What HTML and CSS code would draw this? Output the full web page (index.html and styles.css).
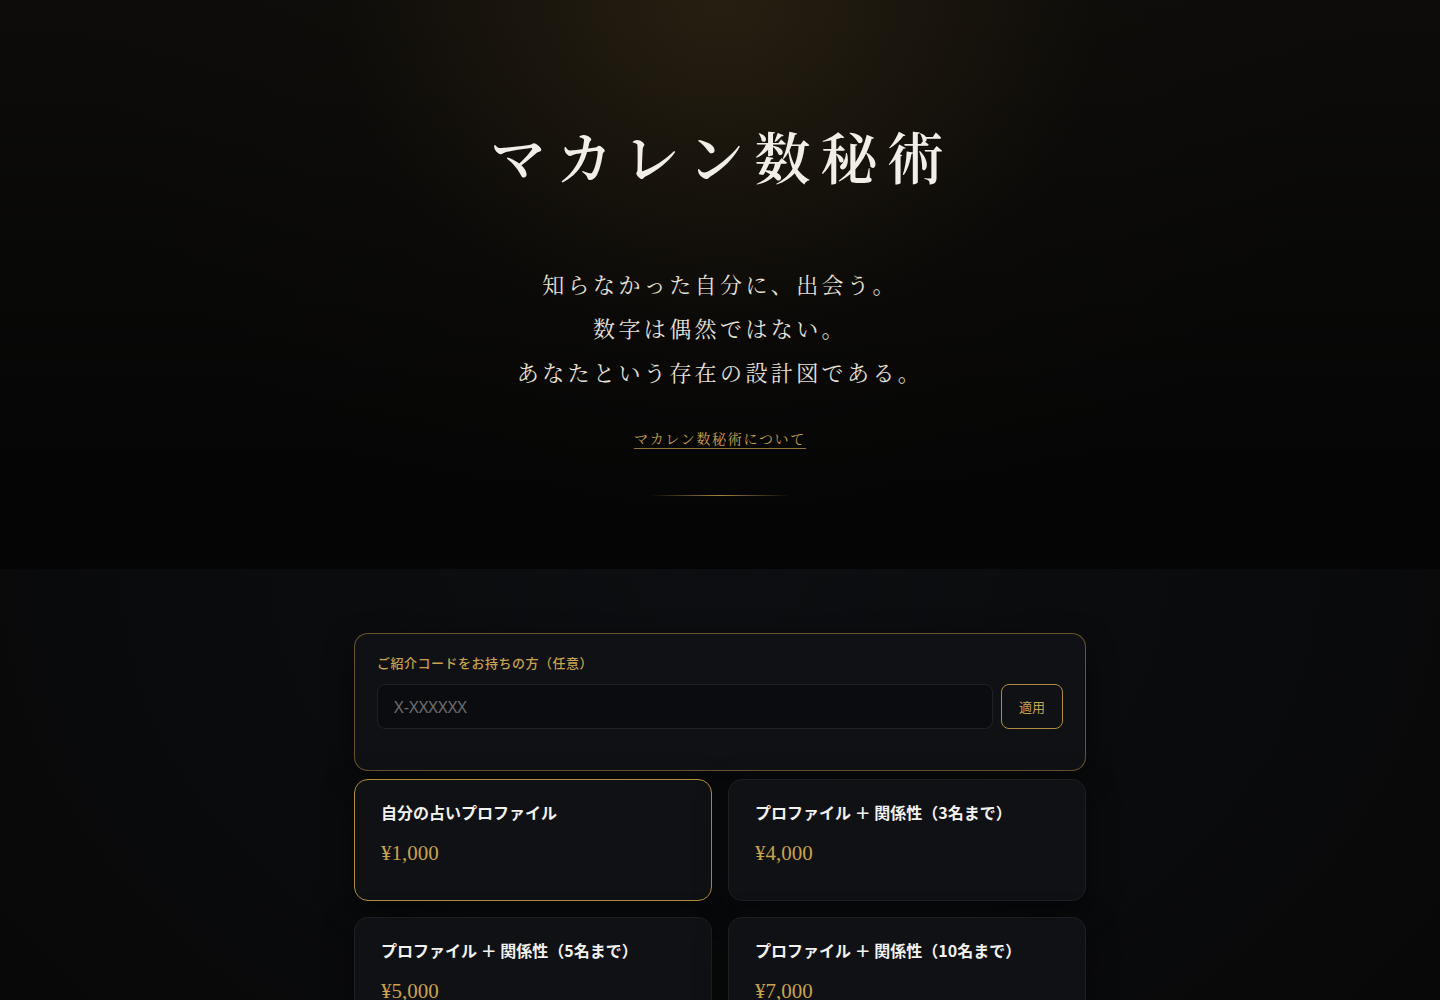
FILE: index.html
```html
<!DOCTYPE html>
<html lang="ja">
    <head>
        <meta charset="UTF-8" />
        <title>マカレン数秘術</title>

        <link rel="stylesheet" href="styles.css">
    </head>
    <body>
        <header class="hero">
            <h1 class="title">マカレン数秘術</h1>

            <p class="lead">
                知らなかった自分に、出会う。<br>
                数字は偶然ではない。<br>
                あなたという存在の設計図である。
            </p>

            <a class="about" href="#">マカレン数秘術について</a>

            <div class="divider"></div>
        </header>

        <main class="shop">
            <div class="wrap">
                <div class="referral">
                    <label class="referral-label" for="code">ご紹介コードをお持ちの方（任意）</label>
                    <div class="referral-row">
                        <input id="code" class="referral-input" type="text" placeholder="X-XXXXXX">
                        <button class="referral-btn" type="button">適用</button>
                    </div>
                    <div class="referral-msg"></div>
                </div>

                <div class="plans">
                    <div class="plan selected">
                        <div class="plan-name">自分の占いプロファイル</div>
                        <div class="plan-price">¥1,000</div>
                    </div>
                    <div class="plan">
                        <div class="plan-name">プロファイル ＋ 関係性（3名まで）</div>
                        <div class="plan-price">¥4,000</div>
                    </div>
                    <div class="plan">
                        <div class="plan-name">プロファイル ＋ 関係性（5名まで）</div>
                        <div class="plan-price">¥5,000</div>
                    </div>
                    <div class="plan">
                        <div class="plan-name">プロファイル ＋ 関係性（10名まで）</div>
                        <div class="plan-price">¥7,000</div>
                    </div>
                </div>
            </div>
        </main>
    </body>
</html>
```

FILE: styles.css
```css
body {
    margin: 0;
    background: #080808;
    color: #ece8df;
    font-family: "Noto Sans CJK JP", "Noto Sans", sans-serif;
}

.hero {
    height: 569px;
    box-sizing: border-box;
    padding-top: 112px;
    text-align: center;
    background:
        radial-gradient(ellipse 640px 560px at 50% 0, rgba(60, 46, 22, 0.55), rgba(20, 16, 10, 0.2) 60%, rgba(0, 0, 0, 0) 100%),
        linear-gradient(#0d0c0a, #050505 85%);
}

.title {
    margin: 0;
    font-family: "Noto Serif CJK JP", "Noto Serif JP", "Noto Sans CJK JP", serif;
    font-size: 56px;
    font-weight: 600;
    letter-spacing: 10.5px;
    line-height: 86px;
    color: #f1eee8;
    padding-left: 4px;
}

.lead {
    margin: 64px 0 0;
    font-family: "Noto Serif CJK JP", "Noto Serif JP", "Noto Sans CJK JP", serif;
    font-size: 22px;
    line-height: 44px;
    letter-spacing: 3.4px;
    color: #e6e1d8;
}

.about {
    display: inline-block;
    margin-top: 34px;
    font-family: "Noto Serif CJK JP", "Noto Serif JP", "Noto Sans CJK JP", serif;
    font-size: 14px;
    letter-spacing: 1.7px;
    line-height: 20px;
    color: #c9a24e;
    text-decoration: none;
    border-bottom: 1px solid rgba(201, 162, 78, 0.7);
}

.divider {
    width: 140px;
    height: 1px;
    margin: 46px auto 0;
    background: linear-gradient(90deg, rgba(201, 162, 78, 0), rgba(201, 162, 78, 0.8), rgba(201, 162, 78, 0));
}

.shop {
    min-height: 431px;
    padding-top: 64px;
    background:
        radial-gradient(ellipse 900px 700px at 50% 0, #0d0e11, #0a0b0d 60%, #080808 100%);
}

.wrap {
    width: 732px;
    margin: 0 auto;
}

.referral {
    border: 1px solid rgba(176, 141, 62, 0.55);
    border-radius: 14px;
    background: #101115;
    padding: 20px 22px 22px;
    box-shadow: 0 10px 30px rgba(0, 0, 0, 0.45);
}

.referral-label {
    display: block;
    font-size: 13px;
    font-weight: 500;
    color: #c9a24e;
    line-height: 18px;
    margin-bottom: 12px;
    letter-spacing: 0.5px;
}

.referral-row {
    display: flex;
    gap: 8px;
}

.referral-input {
    flex: 1;
    height: 45px;
    box-sizing: border-box;
    background: #0b0c0f;
    border: 1px solid #1f2126;
    border-radius: 8px;
    padding: 0 16px;
    font-family: "Noto Sans", "Noto Sans CJK JP", sans-serif;
    font-size: 16.5px;
    color: #ddd;
    outline: none;
}

.referral-input::placeholder {
    color: #6c6c6e;
}

.referral-btn {
    width: 62px;
    height: 45px;
    background: transparent;
    border: 1px solid #b08d3e;
    border-radius: 8px;
    color: #c9a24e;
    font-family: "Noto Sans CJK JP", sans-serif;
    font-size: 13px;
}

.referral-msg {
    height: 19px;
}

.plans {
    display: grid;
    grid-template-columns: 1fr 1fr;
    gap: 16px;
    margin-top: 8px;
}

.plan {
    border: 1px solid #1d1f24;
    border-radius: 14px;
    background: #101115;
    padding: 20px 26px 28px;
    height: 122px;
    box-sizing: border-box;
    box-shadow: 0 10px 30px rgba(0, 0, 0, 0.5);
}

.plan.selected {
    border-color: #b08d3e;
}

.plan-name {
    font-size: 16px;
    font-weight: 700;
    line-height: 24px;
    color: #f2f1ee;
}

.plan-price {
    margin-top: 15px;
    font-family: "Liberation Serif", serif;
    font-size: 21px;
    line-height: 28px;
    color: #c9a24e;
}
```
